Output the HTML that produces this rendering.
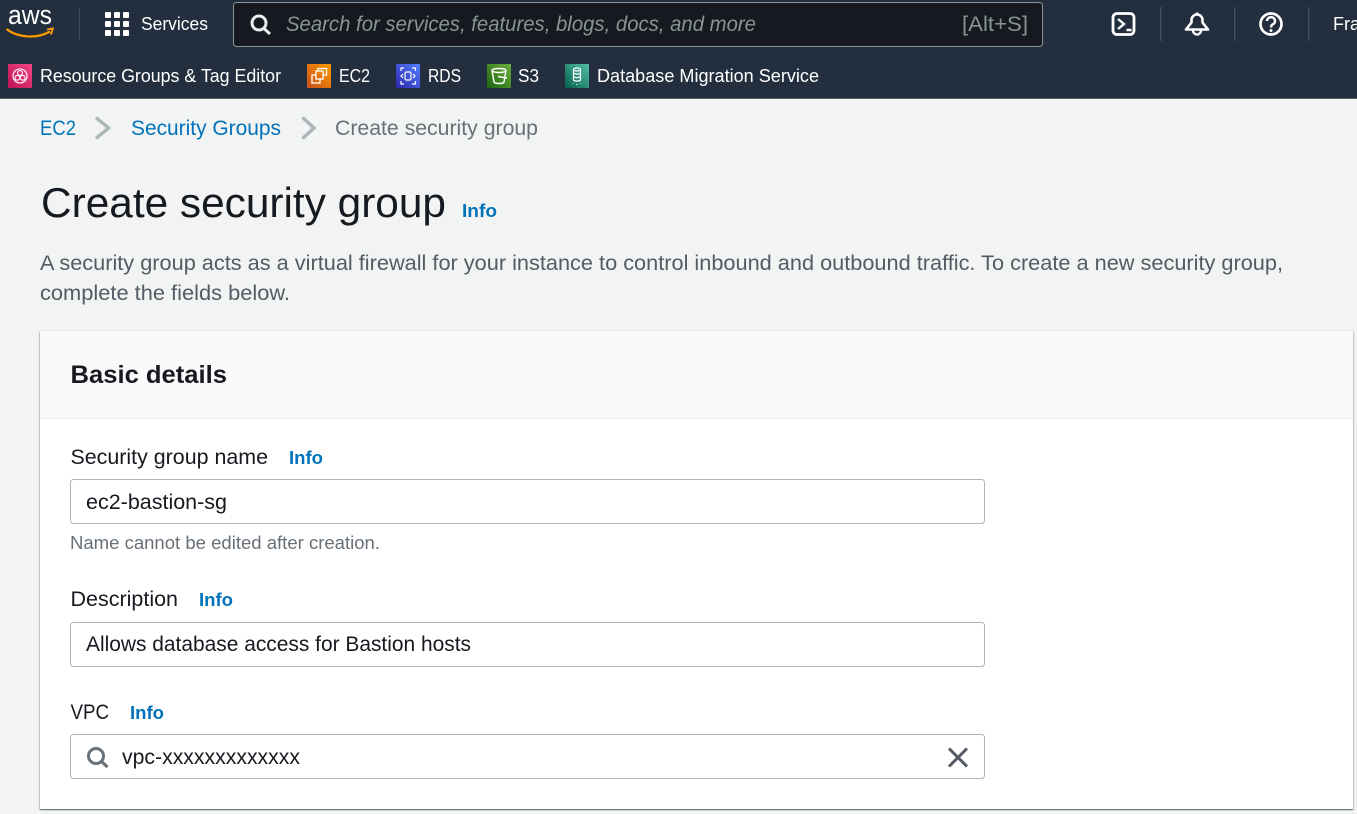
<!DOCTYPE html>
<html><head><meta charset="utf-8"><title>Create security group</title>
<style>
html,body{margin:0;padding:0;width:1357px;height:814px;overflow:hidden;background:#f2f3f3}
.card{position:absolute;left:40px;top:331px;width:1313px;height:478px;background:#fff;box-shadow:0 1px 1px 0 rgba(0,28,36,.5),1px 1px 1px 0 rgba(0,28,36,.15),-1px 1px 1px 0 rgba(0,28,36,.15),0 -1px 0 0 #eaeded}
svg{position:absolute;left:0;top:0}
text{font-family:"Liberation Sans",sans-serif;white-space:pre}
</style></head><body>
<div class="card"></div>
<svg width="1357" height="814" viewBox="0 0 1357 814" xmlns="http://www.w3.org/2000/svg">
<defs>
<linearGradient id="g1" x1="0" y1="1" x2="1" y2="0"><stop offset="0" stop-color="#bc1356"/><stop offset="1" stop-color="#f34482"/></linearGradient>
<linearGradient id="g2" x1="0" y1="1" x2="1" y2="0"><stop offset="0" stop-color="#c8511b"/><stop offset="1" stop-color="#ff9900"/></linearGradient>
<linearGradient id="g3" x1="0" y1="1" x2="1" y2="0"><stop offset="0" stop-color="#2e27ad"/><stop offset="1" stop-color="#527fff"/></linearGradient>
<linearGradient id="g4" x1="0" y1="1" x2="1" y2="0"><stop offset="0" stop-color="#1b660f"/><stop offset="1" stop-color="#6cae3e"/></linearGradient>
<linearGradient id="g5" x1="0" y1="1" x2="1" y2="0"><stop offset="0" stop-color="#055f4e"/><stop offset="1" stop-color="#56c0a7"/></linearGradient>
</defs>

<!-- header -->
<rect x="0" y="0" width="1357" height="98" fill="#232f3e"/>
<rect x="0" y="98" width="1357" height="1" fill="#545b64"/>
<text x="8" y="24" font-size="27" fill="#fff" textLength="44" lengthAdjust="spacingAndGlyphs">aws</text>
<path d="M6.500 29C18 38 37 39 50 31.500" fill="none" stroke="#ff9900" stroke-width="2.200"/>
<path d="M47 29.500L52.800 28.500L51 34.500" fill="none" stroke="#ff9900" stroke-width="1.900"/>
<g fill="#414d5c"><rect x="79" y="7" width="1" height="34"/><rect x="1160" y="7" width="1.500" height="34"/><rect x="1234" y="7" width="1.500" height="34"/><rect x="1308" y="7" width="1.500" height="34"/></g>
<g fill="#fff">
<rect x="105" y="12" width="6" height="6" rx="1"/><rect x="114" y="12" width="6" height="6" rx="1"/><rect x="123" y="12" width="6" height="6" rx="1"/>
<rect x="105" y="21" width="6" height="6" rx="1"/><rect x="114" y="21" width="6" height="6" rx="1"/><rect x="123" y="21" width="6" height="6" rx="1"/>
<rect x="105" y="30" width="6" height="6" rx="1"/><rect x="114" y="30" width="6" height="6" rx="1"/><rect x="123" y="30" width="6" height="6" rx="1"/>
</g>
<text x="141" y="30" font-size="18" fill="#fff" textLength="67" lengthAdjust="spacingAndGlyphs">Services</text>
<rect x="233.500" y="2.500" width="809" height="44" rx="3" fill="#16191f" stroke="#879596"/>
<circle cx="259" cy="23" r="7" fill="none" stroke="#eaeded" stroke-width="3"/>
<path d="M264 28.500L270 34" stroke="#eaeded" stroke-width="3" fill="none"/>
<text x="286" y="31" font-size="21" font-style="italic" fill="#879596" textLength="470" lengthAdjust="spacingAndGlyphs">Search for services, features, blogs, docs, and more</text>
<text x="962" y="31" font-size="21" fill="#879596" textLength="66" lengthAdjust="spacingAndGlyphs">[Alt+S]</text>
<rect x="1113" y="13.500" width="21" height="21" rx="4" fill="none" stroke="#fff" stroke-width="2.800"/>
<path d="M1118 19L1124 24L1118 29M1126.500 30H1131.500" fill="none" stroke="#fff" stroke-width="2.400"/>
<path d="M1186 29.500H1208L1202.500 22.500V20A5.500 5.500 0 0 0 1191.500 20V22.500Z" fill="none" stroke="#fff" stroke-width="2.600" stroke-linejoin="round"/>
<path d="M1197 12.500V15" stroke="#fff" stroke-width="2.400"/>
<path d="M1193 30.500A4 4 0 0 0 1201 30.500" fill="none" stroke="#fff" stroke-width="2.400"/>
<circle cx="1271" cy="24" r="10.500" fill="none" stroke="#fff" stroke-width="2.700"/>
<path d="M1267 21A4 3.800 0 1 1 1272.500 24.500C1271.300 25.200 1271 26 1271 27.500" fill="none" stroke="#fff" stroke-width="2.500"/>
<circle cx="1271" cy="30.500" r="1.500" fill="#fff"/>
<text x="1333" y="30" font-size="18" fill="#fff" textLength="27" lengthAdjust="spacingAndGlyphs">Fra</text>

<!-- favorites -->
<rect x="8" y="64" width="24" height="24" fill="url(#g1)"/>
<g fill="none" stroke="#fff" stroke-width="1.100"><circle cx="20" cy="76" r="7"/><circle cx="20" cy="73" r="2.400"/><circle cx="17.300" cy="77.800" r="2.400"/><circle cx="22.700" cy="77.800" r="2.400"/></g>
<text x="40" y="82" font-size="18" fill="#fff" textLength="241" lengthAdjust="spacingAndGlyphs">Resource Groups &amp; Tag Editor</text>
<rect x="307" y="64" width="24" height="24" fill="url(#g2)"/>
<g fill="none" stroke="#fff" stroke-width="1.300"><rect x="316" y="71" width="7" height="8"/><path d="M318 71V68.500H326.500V75H323M316 75H312V83H320V79"/></g>
<text x="339" y="82" font-size="18" fill="#fff" textLength="31" lengthAdjust="spacingAndGlyphs">EC2</text>
<rect x="396" y="64" width="24" height="24" fill="url(#g3)"/>
<g fill="none" stroke="#fff" stroke-width="1.200"><rect x="405" y="72" width="6" height="8" rx="1.500"/><path d="M401 71V68H404M412 68H415.500V71M401 81V84H404M412 84H415.500V81M403 74L401 76L403 78M413 74L415 76L413 78"/></g>
<text x="428" y="82" font-size="18" fill="#fff" textLength="33" lengthAdjust="spacingAndGlyphs">RDS</text>
<rect x="487" y="64" width="24" height="24" fill="url(#g4)"/>
<g fill="none" stroke="#fff" stroke-width="1.400"><ellipse cx="499" cy="70.500" rx="7" ry="2"/><path d="M492 70.500L494 82C495 84 503 84 504 82L506 70.500M498 76.500L507 78"/></g>
<text x="518" y="82" font-size="18" fill="#fff" textLength="21" lengthAdjust="spacingAndGlyphs">S3</text>
<rect x="565" y="64" width="24" height="24" fill="url(#g5)"/>
<g fill="none" stroke="#fff" stroke-width="1.200"><ellipse cx="577" cy="69.500" rx="3.500" ry="1.500"/><path d="M573.500 69.500V80C574.500 81.500 579.500 81.500 580.500 80V69.500M573.500 73C574.500 74.500 579.500 74.500 580.500 73M573.500 76.500C574.500 78 579.500 78 580.500 76.500"/><path d="M573 83.500V84M577 84V85M581 83.500V84"/></g>
<text x="597" y="82" font-size="18" fill="#fff" textLength="222" lengthAdjust="spacingAndGlyphs">Database Migration Service</text>

<!-- breadcrumb -->
<text x="40" y="135" font-size="21" fill="#0073bb" textLength="36" lengthAdjust="spacingAndGlyphs">EC2</text>
<path d="M96 117.500L108.500 128L96 138.500" fill="none" stroke="#aab7b8" stroke-width="3.400"/>
<text x="131" y="135" font-size="21" fill="#0073bb" textLength="150" lengthAdjust="spacingAndGlyphs">Security Groups</text>
<path d="M302.500 117.500L314 128L302.500 138.500" fill="none" stroke="#aab7b8" stroke-width="3.400"/>
<text x="335" y="135" font-size="21" fill="#687078" textLength="203" lengthAdjust="spacingAndGlyphs">Create security group</text>

<!-- title -->
<text x="41" y="217" font-size="42" fill="#16191f" textLength="405" lengthAdjust="spacingAndGlyphs">Create security group</text>
<text x="462" y="217" font-size="18" font-weight="700" fill="#0073bb" textLength="35" lengthAdjust="spacingAndGlyphs">Info</text>
<text x="40" y="270" font-size="21" fill="#545b64" textLength="1243" lengthAdjust="spacingAndGlyphs">A security group acts as a virtual firewall for your instance to control inbound and outbound traffic. To create a new security group,</text>
<text x="40" y="300" font-size="21" fill="#545b64" textLength="250" lengthAdjust="spacingAndGlyphs">complete the fields below.</text>

<!-- card header -->
<rect x="40" y="331" width="1313" height="87" fill="#fafafa"/>
<rect x="40" y="418" width="1313" height="1" fill="#eaeded"/>
<text x="70.500" y="383" font-size="25" font-weight="700" fill="#16191f" textLength="156.500" lengthAdjust="spacingAndGlyphs">Basic details</text>

<!-- name -->
<text x="70.500" y="464" font-size="21" fill="#16191f" textLength="197.500" lengthAdjust="spacingAndGlyphs">Security group name</text>
<text x="289" y="464" font-size="18" font-weight="700" fill="#0073bb" textLength="34" lengthAdjust="spacingAndGlyphs">Info</text>
<rect x="70.500" y="479.500" width="914" height="44" rx="3" fill="#fff" stroke="#aab7b8"/>
<text x="86" y="509" font-size="21" fill="#16191f" textLength="141" lengthAdjust="spacingAndGlyphs">ec2-bastion-sg</text>
<text x="70" y="549" font-size="18" fill="#687078" textLength="310" lengthAdjust="spacingAndGlyphs">Name cannot be edited after creation.</text>

<!-- description -->
<text x="70.500" y="606" font-size="21" fill="#16191f" textLength="107.500" lengthAdjust="spacingAndGlyphs">Description</text>
<text x="199" y="606" font-size="18" font-weight="700" fill="#0073bb" textLength="34" lengthAdjust="spacingAndGlyphs">Info</text>
<rect x="70.500" y="622.500" width="914" height="44" rx="3" fill="#fff" stroke="#aab7b8"/>
<text x="86" y="651" font-size="21" fill="#16191f" textLength="385" lengthAdjust="spacingAndGlyphs">Allows database access for Bastion hosts</text>

<!-- vpc -->
<text x="70.500" y="719" font-size="21" fill="#16191f" textLength="38.500" lengthAdjust="spacingAndGlyphs">VPC</text>
<text x="130" y="719" font-size="18" font-weight="700" fill="#0073bb" textLength="34" lengthAdjust="spacingAndGlyphs">Info</text>
<rect x="70.500" y="734.500" width="914" height="44" rx="3" fill="#fff" stroke="#aab7b8"/>
<circle cx="96" cy="756" r="7.500" fill="none" stroke="#687078" stroke-width="3"/>
<path d="M101.500 761.500L107.500 767" stroke="#687078" stroke-width="3.200" fill="none"/>
<text x="122" y="764" font-size="21" fill="#16191f" textLength="178" lengthAdjust="spacingAndGlyphs">vpc-xxxxxxxxxxxxx</text>
<path d="M949 748.500L967 766.500M967 748.500L949 766.500" stroke="#545b64" stroke-width="3" fill="none"/>
</svg>
</body></html>
